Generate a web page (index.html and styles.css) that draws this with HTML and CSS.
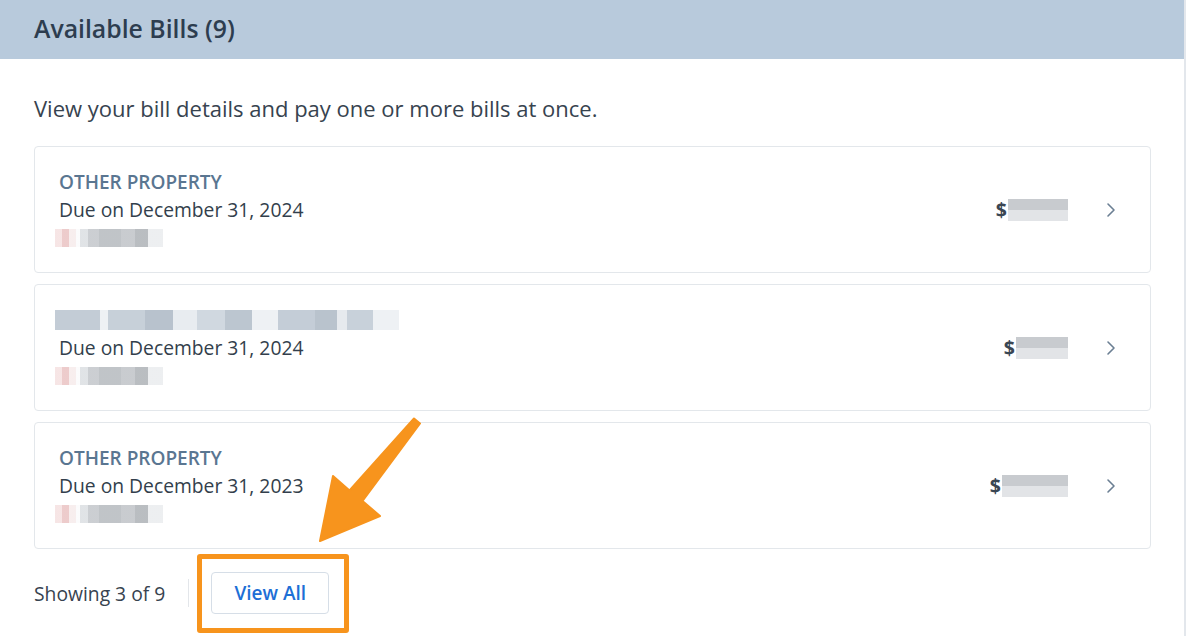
FILE: index.html
```html
<!DOCTYPE html>
<html lang="en">
<head>
<meta charset="utf-8">
<title>Available Bills</title>
<link rel="stylesheet" href="styles.css">
</head>
<body>
<section class="panel">
  <header class="panel-head">
    <h2 class="panel-title">Available Bills (9)</h2>
  </header>
  <div class="panel-body">
    <p class="intro">View your bill details and pay one or more bills at once.</p>
    <ul class="bills">
      <li class="bill">
        <div class="bill-info">
          <div class="bill-label">OTHER PROPERTY</div>
          <div class="bill-due">Due on December 31, 2024</div>
          <div class="line"><span class="mosaic acct"></span></div>
        </div>
        <div class="bill-amount"><span class="dollar">$</span><span class="mosaic amt amt-a"></span></div>
        <svg class="chev" width="10" height="16" viewBox="0 0 10 16"><polyline points="2,2 8,8 2,14" fill="none" stroke="#6b7f93" stroke-width="1.6" stroke-linecap="round" stroke-linejoin="round"/></svg>
      </li>
      <li class="bill">
        <div class="bill-info">
          <div class="line"><span class="mosaic name"></span></div>
          <div class="bill-due">Due on December 31, 2024</div>
          <div class="line"><span class="mosaic acct"></span></div>
        </div>
        <div class="bill-amount"><span class="dollar">$</span><span class="mosaic amt amt-b"></span></div>
        <svg class="chev" width="10" height="16" viewBox="0 0 10 16"><polyline points="2,2 8,8 2,14" fill="none" stroke="#6b7f93" stroke-width="1.6" stroke-linecap="round" stroke-linejoin="round"/></svg>
      </li>
      <li class="bill">
        <div class="bill-info">
          <div class="bill-label">OTHER PROPERTY</div>
          <div class="bill-due">Due on December 31, 2023</div>
          <div class="line"><span class="mosaic acct"></span></div>
        </div>
        <div class="bill-amount"><span class="dollar">$</span><span class="mosaic amt amt-c"></span></div>
        <svg class="chev" width="10" height="16" viewBox="0 0 10 16"><polyline points="2,2 8,8 2,14" fill="none" stroke="#6b7f93" stroke-width="1.6" stroke-linecap="round" stroke-linejoin="round"/></svg>
      </li>
    </ul>
    <div class="footer">
      <span class="count">Showing 3 of 9</span>
      <span class="divider"></span>
      <span class="highlight"><button class="view-all" type="button">View All</button></span>
    </div>
  </div>
  <svg class="arrow" width="1188" height="636" viewBox="0 0 1188 636">
    <polygon points="414,418.5 420,423.5 362.5,501 380,516 320,541 333,476 349.5,490.5" fill="#f7941d" stroke="#f7941d" stroke-width="2" stroke-linejoin="round"/>
  </svg>
</section>
</body>
</html>
```

FILE: styles.css
```css
* { box-sizing: border-box; }
html, body { margin: 0; padding: 0; background: #ffffff; }
body {
  font-family: "Open Sans", "Noto Sans", "Liberation Sans", sans-serif;
  color: #344150;
}
.panel {
  position: relative;
  width: 1186px;
  height: 636px;
  border-right: 2px solid #e3e7ec;
  overflow: hidden;
  background: #fff;
}
.panel-head {
  height: 59px;
  background: #b8cadc;
  display: flex;
  align-items: center;
  padding: 0 0 4px 34px;
}
.panel-title {
  margin: 0;
  font-size: 24.8px;
  font-weight: 600;
  color: #2d3d4f;
}
.panel-body {
  padding: 0 33px 0 34px;
}
.intro {
  margin: 0;
  height: 87px;
  padding-top: 35px;
  font-size: 22px;
  line-height: 28px;
  color: #37434f;
}
.bills {
  list-style: none;
  margin: 0;
  padding: 0;
  display: flex;
  flex-direction: column;
  gap: 11px;
}
.bill {
  height: 127px;
  border: 1px solid #e3e7eb;
  border-radius: 4px;
  display: flex;
  align-items: center;
  padding: 0 34px 0 24px;
}
.bill-info {
  flex: 1;
  display: flex;
  flex-direction: column;
  padding-top: 1px;
}
.bill-label {
  height: 28px;
  line-height: 28px;
  font-size: 19px;
  font-weight: 600;
  color: #5a7691;
}
.bill-due {
  height: 28px;
  line-height: 28px;
  font-size: 19.3px;
  color: #333f4c;
}
.line {
  height: 28px;
  display: flex;
  align-items: center;
}
.mosaic { display: inline-block; }
.acct {
  width: 108px;
  height: 18px;
  margin-left: -4px;
  background:
    linear-gradient(to right, #f6e4e4 0 7px, #ecc9c9 7px 14px, #f7eded 14px 21px, #fbfbfc 21px 25px, #dfe2e5 25px 33px, #c9ccd0 33px 44px, #bdc1c5 44px 66px, #c6c9cd 66px 80px, #b6babe 80px 93px, #eceef0 93px 108px);
  opacity: 0.95;
}
.name {
  width: 344px;
  height: 20px;
  margin-left: -4px;
  background:
    linear-gradient(to right, #c3ccd6 0 45px, #eef1f4 45px 53px, #c7d0d9 53px 90px, #b8c2cd 90px 118px, #e8ecf0 118px 142px, #d0d8e0 142px 170px, #bcc6d0 170px 197px, #eef1f4 197px 223px, #c4cdd7 223px 260px, #b9c3cd 260px 282px, #e6eaee 282px 292px, #c8d1da 292px 318px, #eef1f4 318px 344px);
}
.bill-amount {
  display: flex;
  align-items: center;
  margin-right: 38px;
}
.dollar {
  font-size: 19.5px;
  font-weight: 700;
  color: #3a4653;
}
.amt {
  height: 22px;
  margin-left: 1px;
  background: linear-gradient(to bottom, #c8cbcf 0 11px, #e2e4e7 11px 22px);
}
.amt-a { width: 60px; }
.amt-b { width: 52px; }
.amt-c { width: 66px; }
.chev { display: block; }
.footer {
  display: flex;
  align-items: center;
  margin-top: 23px;
  height: 42px;
}
.count {
  font-size: 19.3px;
  color: #37434f;
}
.divider {
  width: 1px;
  height: 28px;
  background: #e3e6ea;
  margin: 0 22px 0 23px;
}
.highlight {
  position: relative;
  display: inline-block;
}
.highlight::after {
  content: "";
  position: absolute;
  left: -14px;
  right: -20px;
  top: -18px;
  bottom: -19px;
  border: 5px solid #f7941d;
  border-radius: 3px;
  pointer-events: none;
}
.view-all {
  display: block;
  width: 118px;
  height: 42px;
  background: #fff;
  border: 1px solid #d6dee7;
  border-radius: 4px;
  font-family: "Open Sans", "Noto Sans", sans-serif;
  font-size: 19px;
  font-weight: 600;
  color: #1d6fd6;
  padding: 0;
}
.arrow {
  position: absolute;
  left: 0;
  top: 0;
  pointer-events: none;
}
```
